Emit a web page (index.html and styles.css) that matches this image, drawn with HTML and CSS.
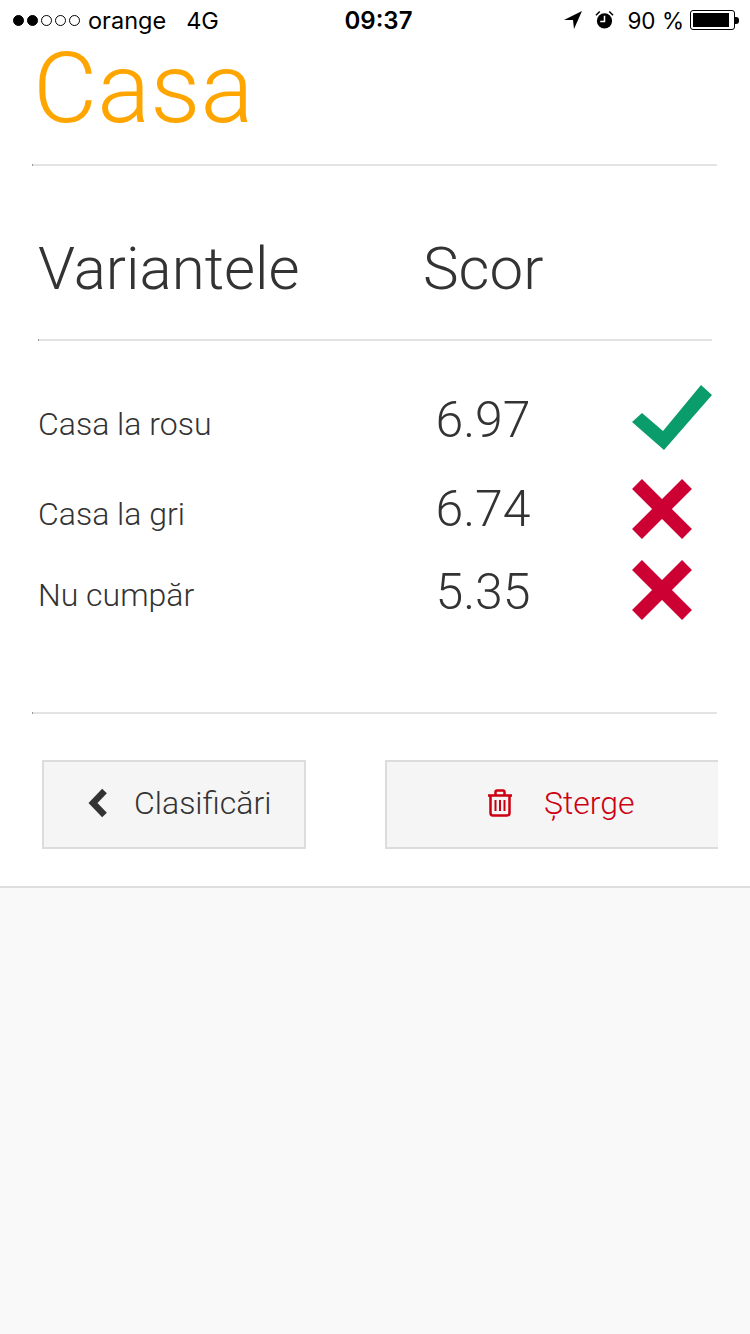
FILE: index.html
```html
<!DOCTYPE html>
<html lang="ro">
<head>
  <meta charset="UTF-8" />
  <meta name="viewport" content="width=device-width, initial-scale=1.0" />
  <title>Casa</title>
  <link rel="stylesheet" href="styles.css">
</head>
<body>
  <div class="status">
    <div class="status-left">
      <span class="signal">
        <i class="dot on"></i><i class="dot on"></i><i class="dot"></i><i class="dot"></i><i class="dot"></i>
      </span>
      <span class="carrier">orange</span>
      <span class="network">4G</span>
    </div>
    <div class="status-time">09:37</div>
    <div class="status-right">
      <svg class="ico-location" width="18" height="18" viewBox="0 0 18 18"><polygon points="0,9 18,0 10,18 9,9" fill="#000"/></svg>
      <svg class="ico-alarm" width="19" height="20" viewBox="0 0 20 20">
        <circle cx="10" cy="11" r="8" fill="#000"/>
        <path d="M1 5 L5 1 M15 1 L19 5" stroke="#000" stroke-width="1.600" fill="none"/>
        <path d="M10 5.500 V11.500 H5.500" stroke="#fff" stroke-width="1.600" fill="none"/>
      </svg>
      <span class="battery-text">90 %</span>
      <span class="battery"><span class="battery-fill"></span></span>
      <span class="battery-tip"></span>
    </div>
  </div>

  <div class="sheet">
    <h1 class="title">Casa</h1>
    <div class="rule"></div>

    <div class="results">
      <div class="row head">
        <div>Variantele</div>
        <div class="score-col">Scor</div>
      </div>
      <div class="rule rule-inner"></div>

      <div class="row item first">
        <div class="name">Casa la rosu</div>
        <div class="score-col score">6.97</div>
        <svg class="mark" width="80" height="66" viewBox="0 0 80 66"><polygon points="0,38 10,29 31,47 69,1 80,11 32,66" fill="#0b9c6b"/></svg>
      </div>
      <div class="row item second">
        <div class="name">Casa la gri</div>
        <div class="score-col score">6.74</div>
        <svg class="mark" width="60" height="60" viewBox="0 0 60 60"><path d="M5 5 L55 55 M55 5 L5 55" stroke="#cc0033" stroke-width="14" fill="none"/></svg>
      </div>
      <div class="row item third">
        <div class="name">Nu cumpăr</div>
        <div class="score-col score">5.35</div>
        <svg class="mark" width="60" height="60" viewBox="0 0 60 60"><path d="M5 5 L55 55 M55 5 L5 55" stroke="#cc0033" stroke-width="14" fill="none"/></svg>
      </div>
    </div>

    <div class="rule"></div>

    <div class="actions">
      <a class="btn btn-back">
        <svg width="20" height="30" viewBox="0 0 20 30"><path d="M16.500 3 L5 15 L16.500 27" stroke="#333" stroke-width="6.500" fill="none"/></svg>
        <span>Clasificări</span>
      </a>
      <a class="btn btn-delete">
        <svg width="26" height="28" viewBox="0 0 26 28">
          <path d="M1 6.500 H25 M8.500 6 V3 Q8.500 1.500 10 1.500 H16 Q17.500 1.500 17.500 3 V6 M3.500 6.500 V24 Q3.500 26.500 6 26.500 H20 Q22.500 26.500 22.500 24 V6.500" stroke="#cc0011" stroke-width="2.500" fill="none"/>
          <path d="M8.500 11 V22 M13 11 V22 M17.500 11 V22" stroke="#cc0011" stroke-width="2" fill="none"/>
        </svg>
        <span>Șterge</span>
      </a>
    </div>
  </div>
</body>
</html>
```

FILE: styles.css
```css
body {
  margin: 0;
  background-color: #f9f9f9;
  font-family: 'Roboto', sans-serif;
  font-weight: 300;
  color: #333;
}

.status {
  height: 40px;
  background-color: #fff;
  display: flex;
  align-items: center;
  justify-content: space-between;
  padding: 0 11px 0 13px;
  font-family: 'Inter', sans-serif;
  font-weight: 400;
  font-size: 22.500px;
  color: #000;
}

.status-left,
.status-right {
  display: flex;
  align-items: center;
  width: 300px;
}

.status-left {
  width: 305px;
}

.status-right {
  justify-content: flex-end;
}

.signal {
  display: flex;
  gap: 3px;
}

.dot {
  box-sizing: border-box;
  width: 11px;
  height: 11px;
  border-radius: 50%;
  border: 1px solid #000;
}

.dot.on {
  background-color: #000;
}

.carrier {
  margin-left: 8px;
  font-size: 23.500px;
}

.network {
  margin-left: 20px;
  font-size: 23.500px;
}

.status-time {
  font-weight: 600;
  font-size: 24px;
}

.ico-location {
  margin-right: 13px;
}

.ico-alarm {
  margin-right: 13px;
}

.battery-text {
  margin-right: 6px;
}

.battery {
  box-sizing: border-box;
  width: 45px;
  height: 20px;
  border: 1px solid #000;
  border-radius: 3px;
  padding: 2px;
  display: flex;
}

.battery-fill {
  flex: 1;
  margin-right: 3px;
  background-color: #000;
}

.battery-tip {
  width: 4px;
  height: 7px;
  background-color: #000;
  border-radius: 0 3px 3px 0;
}

.sheet {
  background-color: #fff;
  border-bottom: 2px solid #dedede;
  height: 846px;
}

.title {
  margin: 0;
  padding-left: 33px;
  height: 124px;
  font-size: 99px;
  line-height: 96px;
  font-weight: 300;
  color: #ffa500;
}

.rule {
  height: 2px;
  margin: 0 33px 0 32px;
  background-color: #e3e3e3;
  border-left: 1px solid #999;
}

.rule-inner {
  margin: 0 38px 0 38px;
}

.results {
  height: 546px;
}

.row {
  display: grid;
  grid-template-columns: 385px 119px auto;
  align-items: center;
  padding-left: 38px;
}

.head {
  box-sizing: border-box;
  height: 173px;
  padding-top: 31px;
  font-size: 60px;
}

.score-col {
  text-align: center;
  white-space: nowrap;
}

.name {
  font-size: 32px;
  padding-top: 10px;
}

.score {
  font-size: 50px;
  padding: 4px 0 0 1px;
}

.item.first {
  height: 66px;
  margin-top: 43px;
}

.first .name {
  padding-top: 14px;
}

.first .score {
  padding-top: 6px;
}

.item.second {
  height: 60px;
  margin-top: 29px;
}

.second .score {
  padding-top: 0;
}

.item.third {
  height: 60px;
  margin-top: 20px;
}

.mark {
  margin-left: 90px;
}

.actions {
  display: flex;
  padding: 46px 32px 0 42px;
  justify-content: space-between;
}

.btn {
  box-sizing: border-box;
  height: 89px;
  padding-bottom: 4px;
  background-color: #f5f5f5;
  border: 2px solid #dcdcdc;
  display: flex;
  align-items: center;
  font-size: 32px;
}

.btn-back {
  width: 264px;
  padding-left: 44px;
  gap: 26px;
}

.btn-delete {
  width: 333px;
  border-right: none;
  padding-left: 100px;
  gap: 31px;
  color: #cc0011;
}
```
